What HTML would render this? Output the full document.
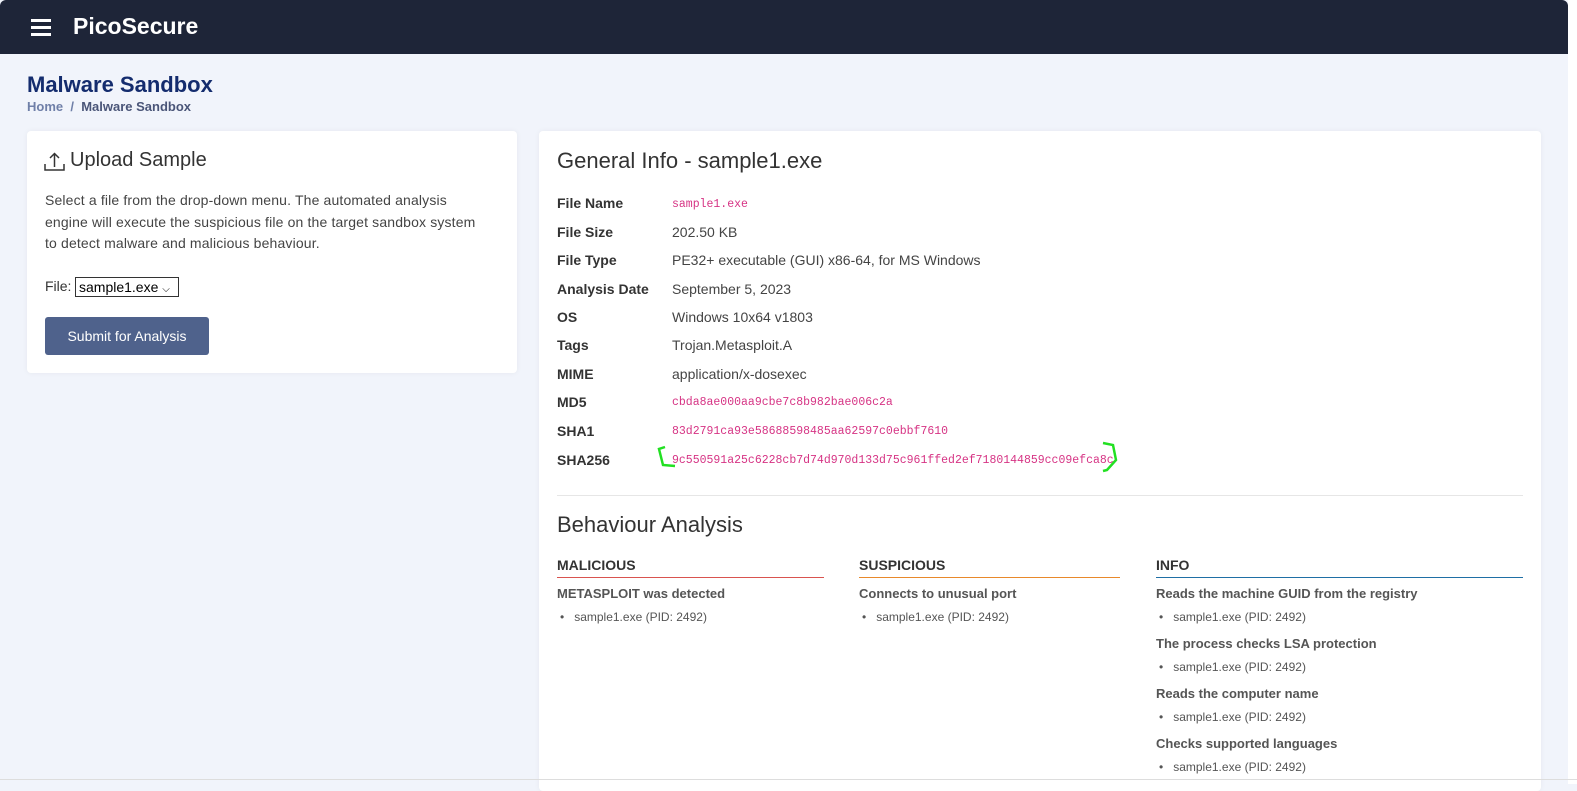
<!DOCTYPE html>
<html><head><meta charset="utf-8"><style>
*{margin:0;padding:0;box-sizing:border-box}
body{width:1577px;height:784px;overflow:hidden;background:#f1f4fb;font-family:"Liberation Sans",sans-serif;color:#444;position:relative}
.a{position:absolute;white-space:nowrap}
.nav{left:0;top:0;width:1568px;height:54px;background:#1e2538;border-radius:6px 6px 0 0}
.card{background:#fff;border-radius:4px;box-shadow:0 0 6px rgba(0,0,0,.05)}
.lbl{left:557px;font-weight:bold;font-size:14px;color:#333}
.val{left:672px;font-size:14px;color:#444}
.mono{font-family:"Liberation Mono",monospace;font-size:11.5px;color:#d63384}
.h{font-weight:bold;font-size:14px;color:#333}
.b{font-weight:bold;font-size:13px;color:#555}
.li{font-size:12px;color:#555}
</style></head><body>
<div class="a" style="left:1568px;top:0;width:9px;height:784px;background:#fff"></div>
<div class="a nav"></div>
<div class="a" style="left:31px;top:19px;width:20px;height:2.5px;background:#fff"></div>
<div class="a" style="left:31px;top:26px;width:20px;height:2.5px;background:#fff"></div>
<div class="a" style="left:31px;top:33px;width:20px;height:2.5px;background:#fff"></div>
<div class="a" style="left:73px;top:13px;color:#fff;font-weight:bold;font-size:23px">PicoSecure</div>
<div class="a" style="left:27px;top:72px;color:#142c6e;font-weight:bold;font-size:22px">Malware Sandbox</div>
<div class="a" style="left:27px;top:99px;font-size:13px;font-weight:bold;color:#6f7fa8">Home &nbsp;/&nbsp; <span style="color:#4a5578">Malware Sandbox</span></div>

<div class="a card" style="left:27px;top:131px;width:490px;height:242px"></div>
<svg class="a" style="left:44px;top:152px" width="22" height="20" viewBox="0 0 22 20"><path d="M1 12v6h19v-6M10.5 15V2M6 6l4.5-4.5L15 6" fill="none" stroke="#333" stroke-width="1.5"/></svg>
<div class="a" style="left:70px;top:149px;font-size:20px;color:#333">Upload Sample</div>
<div class="a" style="left:45px;top:190px;font-size:14px;line-height:21.5px;color:#444;letter-spacing:.15px">Select a file from the drop-down menu. The automated analysis<br>engine will execute the suspicious file on the target sandbox system<br>to detect malware and malicious behaviour.</div>
<div class="a" style="left:45px;top:278px;font-size:14px;color:#333">File:</div>
<div class="a" style="left:75px;top:277px;width:104px;height:20px;border:1px solid #333;font-size:14px;color:#000;padding:1px 0 0 3px">sample1.exe <span style="font-size:10px">&#9013;</span></div>
<div class="a" style="left:45px;top:317px;width:164px;height:38px;background:#4f628c;border-radius:3px;color:#fff;font-size:14px;text-align:center;line-height:38px">Submit for Analysis</div>

<div class="a card" style="left:539px;top:131px;width:1002px;height:660px"></div>
<div class="a" style="left:557px;top:148px;font-size:22px;color:#333">General Info - sample1.exe</div>
<div class="a lbl" style="top:195px">File Name</div><div class="a val mono" style="top:198px">sample1.exe</div>
<div class="a lbl" style="top:224px">File Size</div><div class="a val" style="top:224px">202.50 KB</div>
<div class="a lbl" style="top:252px">File Type</div><div class="a val" style="top:252px">PE32+ executable (GUI) x86-64, for MS Windows</div>
<div class="a lbl" style="top:281px">Analysis Date</div><div class="a val" style="top:281px">September 5, 2023</div>
<div class="a lbl" style="top:309px">OS</div><div class="a val" style="top:309px">Windows 10x64 v1803</div>
<div class="a lbl" style="top:337px">Tags</div><div class="a val" style="top:337px">Trojan.Metasploit.A</div>
<div class="a lbl" style="top:366px">MIME</div><div class="a val" style="top:366px">application/x-dosexec</div>
<div class="a lbl" style="top:394px">MD5</div><div class="a val mono" style="top:396px">cbda8ae000aa9cbe7c8b982bae006c2a</div>
<div class="a lbl" style="top:423px">SHA1</div><div class="a val mono" style="top:425px">83d2791ca93e58688598485aa62597c0ebbf7610</div>
<div class="a lbl" style="top:452px">SHA256</div><div class="a val mono" style="top:454px">9c550591a25c6228cb7d74d970d133d75c961ffed2ef7180144859cc09efca8c</div>
<svg class="a" style="left:655px;top:440px" width="470" height="35"><path d="M10 7 L4 9 L8 25 L20 26" fill="none" stroke="#22e022" stroke-width="2.5"/><path d="M448 3 L458 5 L461 20 L452 30 L448 31" fill="none" stroke="#22e022" stroke-width="2.5"/></svg>
<div class="a" style="left:557px;top:495px;width:966px;height:1px;background:#e6e6e6"></div>
<div class="a" style="left:557px;top:512px;font-size:22px;color:#333">Behaviour Analysis</div>

<div class="a h" style="left:557px;top:557px">MALICIOUS</div>
<div class="a" style="left:557px;top:577px;width:267px;height:1px;background:#d9534f"></div>
<div class="a b" style="left:557px;top:586px">METASPLOIT was detected</div>
<div class="a li" style="left:560px;top:610px">•&nbsp;&nbsp; sample1.exe (PID: 2492)</div>

<div class="a h" style="left:859px;top:557px">SUSPICIOUS</div>
<div class="a" style="left:859px;top:577px;width:261px;height:1px;background:#e8892b"></div>
<div class="a b" style="left:859px;top:586px">Connects to unusual port</div>
<div class="a li" style="left:862px;top:610px">•&nbsp;&nbsp; sample1.exe (PID: 2492)</div>

<div class="a h" style="left:1156px;top:557px">INFO</div>
<div class="a" style="left:1156px;top:577px;width:367px;height:1px;background:#1f6fa5"></div>
<div class="a b" style="left:1156px;top:586px">Reads the machine GUID from the registry</div>
<div class="a li" style="left:1159px;top:610px">•&nbsp;&nbsp; sample1.exe (PID: 2492)</div>
<div class="a b" style="left:1156px;top:636px">The process checks LSA protection</div>
<div class="a li" style="left:1159px;top:660px">•&nbsp;&nbsp; sample1.exe (PID: 2492)</div>
<div class="a b" style="left:1156px;top:686px">Reads the computer name</div>
<div class="a li" style="left:1159px;top:710px">•&nbsp;&nbsp; sample1.exe (PID: 2492)</div>
<div class="a b" style="left:1156px;top:736px">Checks supported languages</div>
<div class="a li" style="left:1159px;top:760px">•&nbsp;&nbsp; sample1.exe (PID: 2492)</div>
<div class="a" style="left:0;top:779px;width:1577px;height:1px;background:#ddd"></div>
</body></html>
